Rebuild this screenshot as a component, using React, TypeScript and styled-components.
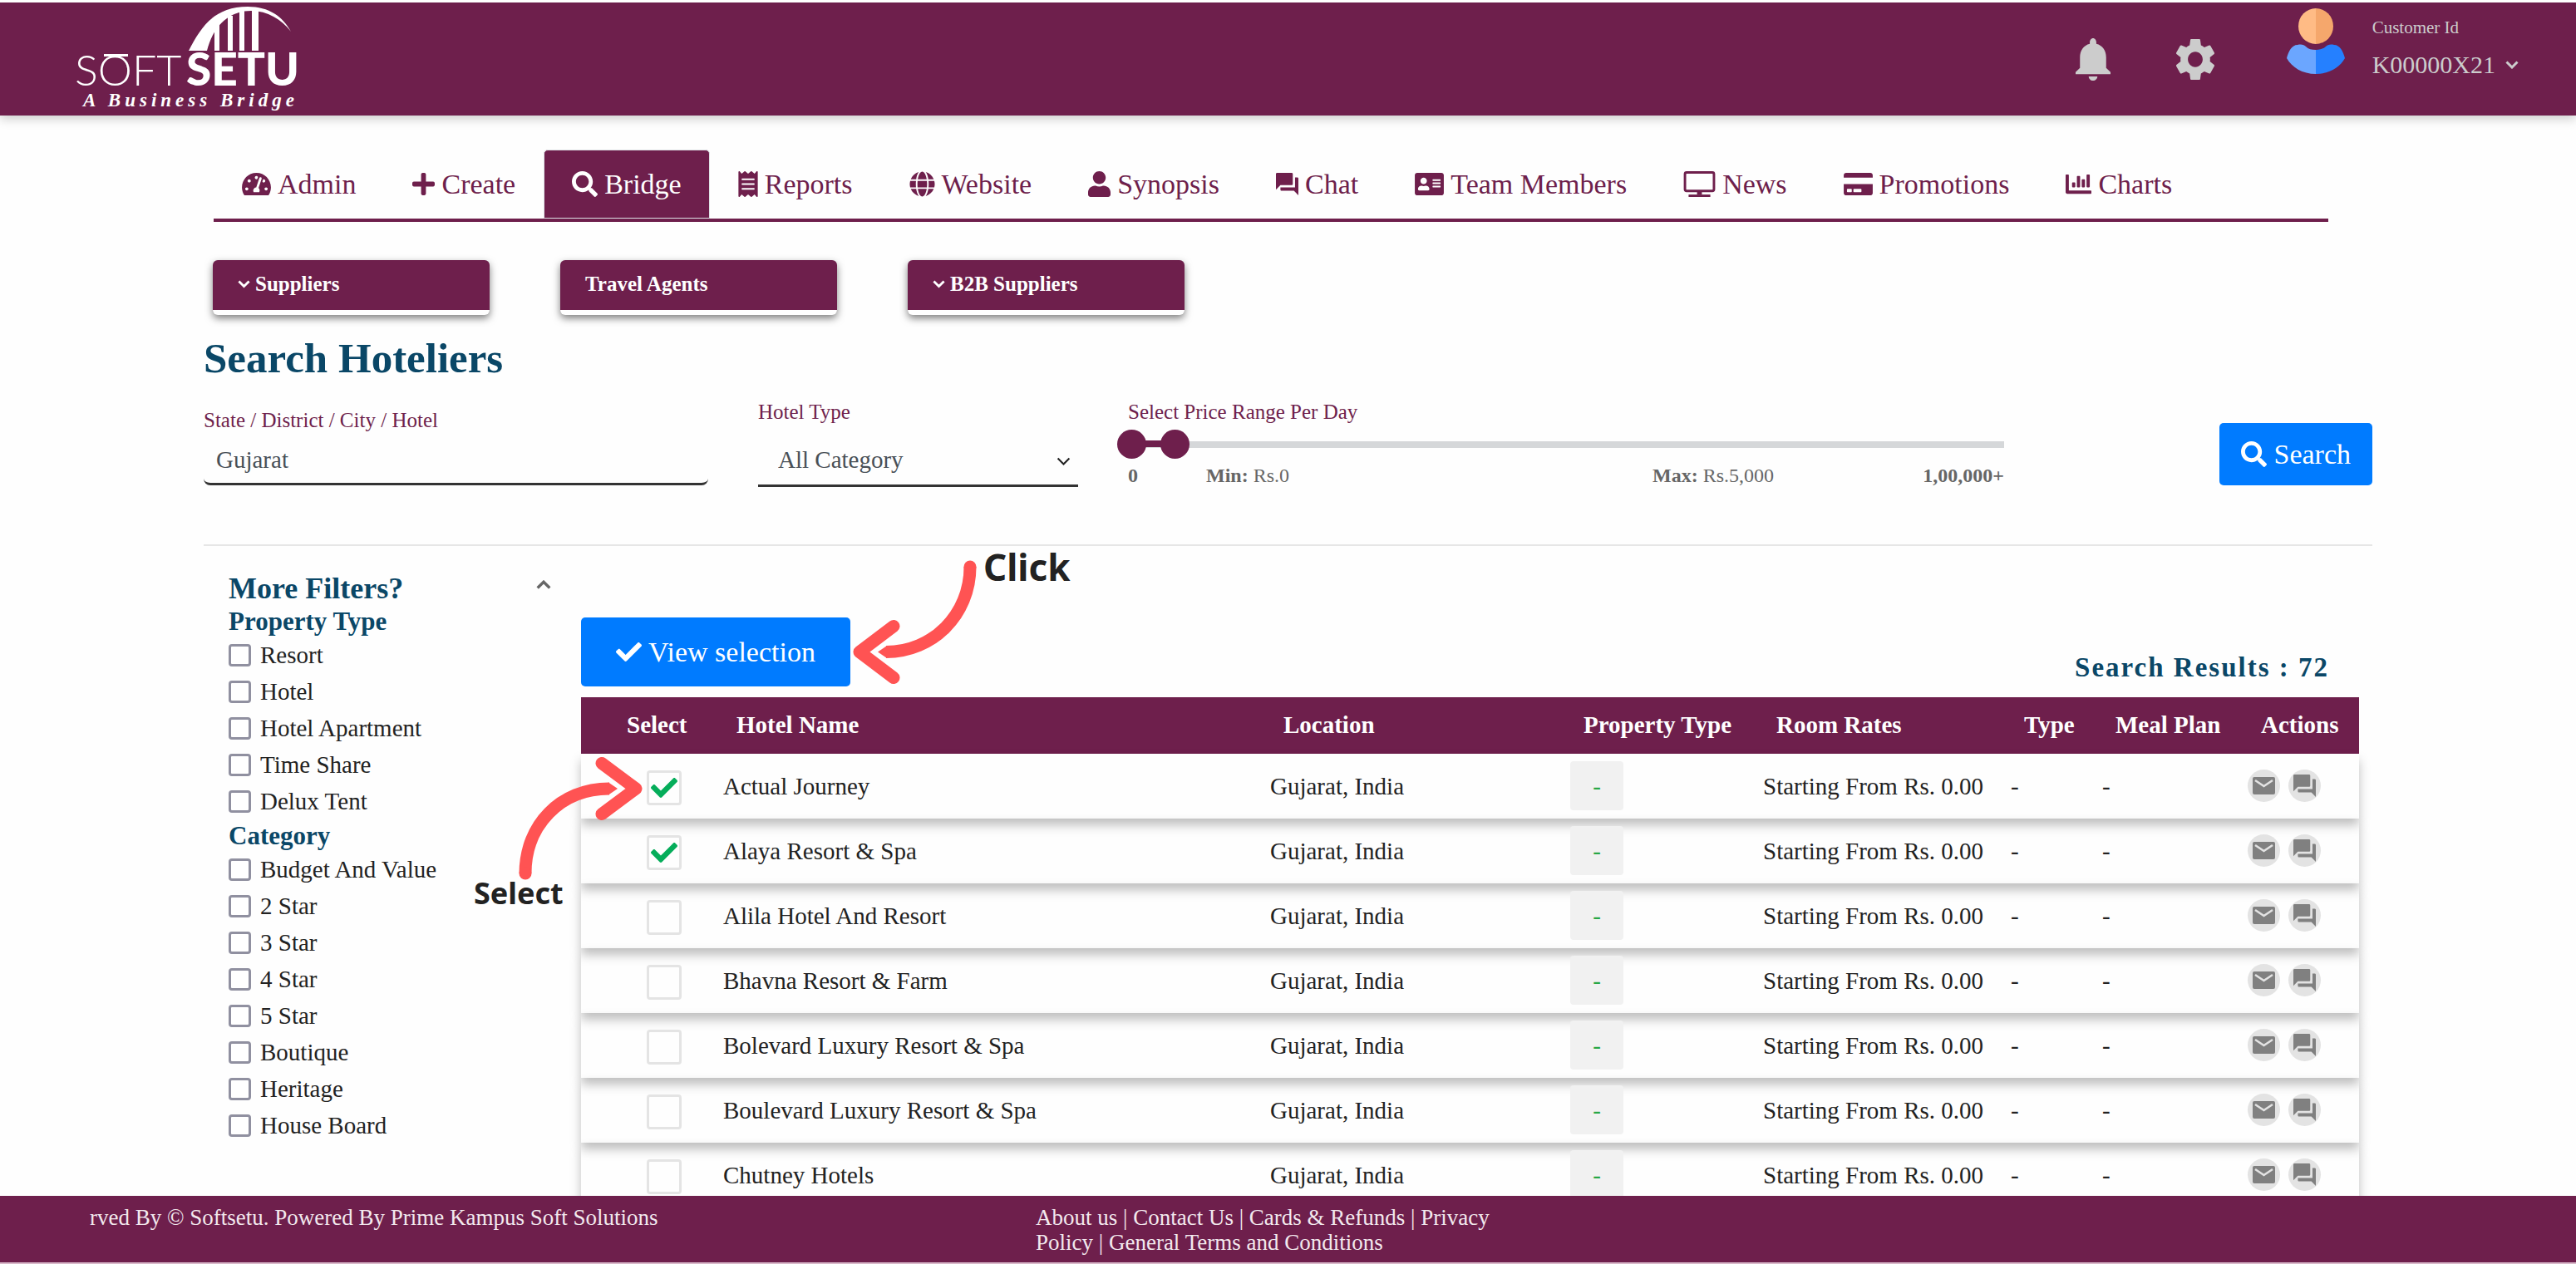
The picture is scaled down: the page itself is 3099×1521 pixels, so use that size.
import React from 'react';
import styled, { createGlobalStyle } from 'styled-components';
import {
  FaTachometerAlt,
  FaPlus,
  FaSearch,
  FaReceipt,
  FaGlobe,
  FaUser,
  FaAddressCard,
  FaCreditCard,
  FaChartBar,
  FaCheck,
} from 'react-icons/fa';

const maroon = '#6e1f4c';
const navy = '#0a4767';
const blue = '#007bff';
const coral = '#ff5353';

const GlobalStyle = createGlobalStyle`
  * { box-sizing: border-box; }
  body {
    margin: 0;
    background: #fefefe;
    color: #222;
    font-family: "Liberation Serif", "Times New Roman", serif;
  }
  button, input, select { font-family: inherit; }
`;

const Page = styled.div`
  display: flex;
  flex-direction: column;
  height: 100vh;
`;

/* ---------- header ---------- */

const Header = styled.header`
  display: flex;
  align-items: center;
  flex: none;
  height: 139px;
  padding: 0 69px 0 88px;
  border-top: 3px solid #fff;
  background: ${maroon};
  color: #ccc;
  box-shadow: 0 4px 12px rgba(0, 0, 0, 0.2);
  z-index: 1;
`;

const LogoLink = styled.a`
  display: block;
  margin-right: auto;
  svg { display: block; }
`;

const HeaderButton = styled.button`
  display: flex;
  margin-right: 78px;
  padding: 0;
  border: 0;
  background: none;
  color: #ccc;
`;

const Avatar = styled.svg`
  align-self: flex-start;
  margin: 7px 33px 0 8px;
`;

const Account = styled.div`
  display: flex;
  flex-direction: column;
  align-self: flex-start;
  gap: 16px;
  margin-top: 18px;
`;

const AccountLabel = styled.span`
  font-size: 21px;
  line-height: 24px;
`;

const AccountButton = styled.button`
  display: flex;
  align-items: center;
  gap: 12px;
  padding: 0;
  border: 0;
  background: none;
  color: #ccc;
  font-size: 30px;
  line-height: 34px;
`;

/* ---------- navigation ---------- */

const Main = styled.main`
  flex: 1;
  min-height: 0;
  padding: 41px 245px 0;
  overflow-y: auto;
  scrollbar-width: none;
`;

const Nav = styled.nav`
  display: flex;
  margin: 0 53px 0 12px;
  border-bottom: 4px solid ${maroon};
`;

const NavLink = styled.a<{ $active?: boolean }>`
  display: flex;
  align-items: center;
  gap: 8px;
  height: 83px;
  padding: 0 33px;
  border: 1px solid ${(p) => (p.$active ? '#dee2e6' : 'transparent')};
  border-radius: 5px 5px 0 0;
  background: ${(p) => (p.$active ? maroon : 'transparent')};
  color: ${(p) => (p.$active ? '#fff' : maroon)};
  font-size: 34px;
  line-height: 40px;
  text-decoration: none;
  white-space: nowrap;
`;

const NavIcon = styled.span<{ $w: number }>`
  display: flex;
  flex: none;
  width: ${(p) => p.$w}px;
  svg { width: 100%; height: 31px; }
`;

const Pills = styled.div`
  display: flex;
  gap: 85px;
  margin: 46px 0 24px 11px;
`;

const Pill = styled.button`
  display: flex;
  align-items: center;
  gap: 6px;
  width: 333px;
  height: 66px;
  padding: 0 30px 2px;
  border: 0;
  border-bottom: 6px solid #fff;
  border-radius: 6px;
  background: ${maroon};
  color: #fff;
  font-size: 25px;
  font-weight: 700;
  box-shadow: 0 4px 10px rgba(0, 0, 0, 0.5);
`;

/* ---------- search form ---------- */

const Title = styled.h1`
  margin: 0;
  color: ${navy};
  font-size: 51px;
  line-height: 56px;
`;

const SearchForm = styled.form`
  display: grid;
  grid-template-columns: 607fr 385fr 1054fr 383fr;
  column-gap: 60px;
  align-items: start;
  padding: 22px 0 68px;
  border-bottom: 2px solid #e6e6e6;
`;

const Field = styled.div<{ $drop?: boolean }>`
  display: flex;
  flex-direction: column;
  margin-top: ${(p) => (p.$drop ? '10px' : '0')};
`;

const Label = styled.label`
  color: ${maroon};
  font-size: 25px;
  line-height: 30px;
`;

const TextInput = styled.input`
  width: 100%;
  height: 63px;
  padding: 4px 15px 0;
  border: 0;
  border-bottom: 3px solid #333;
  border-radius: 8px;
  background: transparent;
  color: #495057;
  font-size: 29px;
`;

const SelectWrap = styled.div`
  display: flex;
  position: relative;
  svg {
    position: absolute;
    right: 9px;
    top: 39px;
    pointer-events: none;
  }
`;

const Select = styled.select`
  width: 100%;
  height: 75px;
  padding: 12px 24px 0;
  border: 0;
  border-bottom: 3px solid #333;
  border-radius: 0;
  background: transparent;
  color: #495057;
  font-size: 29px;
  appearance: none;
`;

const Track = styled.div`
  position: relative;
  height: 35px;
  margin: 6px 0 5px;
  background: linear-gradient(#d5d7d9, #d5d7d9) center / 100% 8px no-repeat;
`;

const TrackFill = styled.div`
  position: absolute;
  left: 0;
  top: 13px;
  height: 8px;
  background: ${maroon};
`;

const Range = styled.input`
  position: absolute;
  left: -13px;
  top: 0;
  width: calc(100% + 21px);
  height: 35px;
  margin: 0;
  background: none;
  appearance: none;
  pointer-events: none;
  &::-webkit-slider-thumb {
    width: 35px;
    height: 35px;
    border: 0;
    border-radius: 50%;
    background: ${maroon};
    appearance: none;
    pointer-events: auto;
  }
`;

const Scale = styled.div`
  display: grid;
  grid-template-columns: 94fr 537fr 300fr 123fr;
  color: #666;
  font-size: 24px;
  line-height: 30px;
  span:last-child { text-align: right; }
`;

const PrimaryButton = styled.button<{ $wide?: boolean }>`
  display: flex;
  align-items: center;
  justify-content: center;
  gap: 8px;
  height: ${(p) => (p.$wide ? '83px' : '75px')};
  padding: 0 ${(p) => (p.$wide ? '42px' : '26px')};
  border: 0;
  border-radius: 5px;
  background: ${blue};
  color: #fff;
  font-size: 34px;
  white-space: nowrap;
  svg { width: 31px; height: 31px; }
`;

const SubmitSlot = styled.div`
  display: flex;
  justify-content: flex-end;
  margin-top: 28px;
`;

/* ---------- filters ---------- */

const Columns = styled.div`
  display: grid;
  grid-template-columns: 454fr 2139fr;
  padding-right: 16px;
`;

const Filters = styled.aside`
  padding: 31px 36px 0 30px;
`;

const FiltersHead = styled.div`
  display: flex;
  align-items: flex-start;
  justify-content: space-between;
`;

const FiltersTitle = styled.h2`
  margin: 0;
  color: ${navy};
  font-size: 36px;
  line-height: 40px;
`;

const Collapse = styled.button`
  padding: 9px 0;
  border: 0;
  background: none;
  color: #666;
`;

const Group = styled.fieldset`
  margin: 0;
  padding: 0;
  border: 0;
`;

const GroupTitle = styled.legend`
  padding: 2px 0 0;
  color: ${navy};
  font-size: 31px;
  font-weight: 700;
  line-height: 36px;
`;

const FilterOption = styled.label`
  display: flex;
  align-items: center;
  gap: 11px;
  height: 44px;
  font-size: 29px;
`;

const FilterBox = styled.input`
  width: 27px;
  height: 27px;
  margin: 0;
  border: 3px solid #9090a0;
  border-radius: 4px;
  background: #fff;
  appearance: none;
`;

/* ---------- results ---------- */

const Results = styled.section`
  position: relative;
  padding-top: 86px;
`;

const ResultsBar = styled.div`
  display: flex;
  align-items: flex-end;
  justify-content: space-between;
  margin-bottom: 13px;
  padding-right: 36px;
`;

const ResultCount = styled.strong`
  padding-bottom: 3px;
  color: ${navy};
  font-size: 33px;
  line-height: 40px;
  letter-spacing: 2px;
`;

const Table = styled.table`
  width: 100%;
  border-spacing: 0;
  table-layout: fixed;
  font-size: 29px;
  line-height: 34px;
`;

const Col = styled.col<{ $w: number }>`
  width: ${(p) => p.$w}px;
`;

const HeadCell = styled.th`
  height: 68px;
  padding: 0 0 3px 16px;
  background: ${maroon};
  color: #fff;
  text-align: left;
  white-space: nowrap;
  &:first-child { padding-left: 55px; }
`;

const Row = styled.tr`
  box-shadow: 0 8px 12px rgba(0, 0, 0, 0.25);
`;

const Cell = styled.td`
  height: 78px;
  padding: 0 0 1px;
  white-space: nowrap;
  &:first-child { padding-left: 79px; }
`;

const Pick = styled.label`
  display: grid;
  width: 42px;
  height: 42px;
  margin-top: 4px;
  place-items: center;
  svg {
    grid-area: 1 / 1;
    width: 32px;
    height: 32px;
    color: #05ad5a;
    pointer-events: none;
  }
`;

const PickBox = styled.input`
  grid-area: 1 / 1;
  width: 42px;
  height: 42px;
  margin: 0;
  border: 3px solid #e4e4e4;
  border-radius: 4px;
  appearance: none;
`;

const Chip = styled.span`
  display: flex;
  align-items: center;
  justify-content: center;
  width: 64px;
  height: 59px;
  border-radius: 4px;
  background: #f1f1f1;
  color: #28a745;
`;

const Actions = styled.div`
  display: flex;
  gap: 10px;
`;

const RoundButton = styled.button`
  display: flex;
  align-items: center;
  justify-content: center;
  width: 39px;
  height: 39px;
  padding: 0;
  border: 0;
  border-radius: 50%;
  background: #e3e3e3;
  color: #808080;
`;

/* ---------- guide arrows over the results ---------- */

const Hint = styled.div<{ $x: number; $y: number }>`
  position: absolute;
  left: ${(p) => p.$x}px;
  top: ${(p) => p.$y}px;
  pointer-events: none;
  svg { display: block; overflow: visible; }
`;

const HintText = styled.span<{ $x: number; $y: number; $size: number }>`
  position: absolute;
  left: ${(p) => p.$x}px;
  top: ${(p) => p.$y}px;
  color: #222;
  font-family: "Noto Sans", "Open Sans", sans-serif;
  font-size: ${(p) => p.$size}px;
  font-weight: 700;
  line-height: 50px;
`;

/* ---------- footer ---------- */

const Footer = styled.footer`
  display: grid;
  grid-template-columns: 1138fr 560fr 1293fr;
  flex: none;
  padding: 11px 0 9px 108px;
  border-bottom: 2px solid #d9b9ca;
  background: ${maroon};
  color: #f3e9ee;
  font-size: 27px;
  line-height: 30px;
  z-index: 1;
  p { margin: 0; }
  a { color: inherit; text-decoration: none; }
`;

/* ---------- drawings ---------- */

const Chevron = ({ size = 16, up = false, width = 3 }: { size?: number; up?: boolean; width?: number }) => (
  <svg width={size} height={(size * 10) / 16} viewBox="0 0 16 10" fill="none" stroke="currentColor" strokeWidth={width} aria-hidden="true">
    <path d={up ? 'M1.5 8.5 8 2l6.5 6.5' : 'M1.5 1.5 8 8l6.5-6.5'} />
  </svg>
);

const BellIcon = () => (
  <svg width="42" height="51" viewBox="4 2 16 20" fill="currentColor" preserveAspectRatio="none">
    <path d="M12 22c1.1 0 2-.9 2-2h-4c0 1.1.89 2 2 2zm6-6v-5c0-3.07-1.64-5.64-4.5-6.32V4c0-1.1-.67-2-1.5-2s-1.5.9-1.5 2v.68C7.63 5.36 6 7.92 6 11v5l-2 2v1h16v-1l-2-2z" />
  </svg>
);

const GearIcon = () => (
  <svg width="48" height="51" viewBox="2.3 2 19.4 20" fill="currentColor" preserveAspectRatio="none">
    <path d="M19.14 12.94c.04-.3.06-.61.06-.94 0-.32-.02-.64-.07-.94l2.03-1.58c.18-.14.23-.41.12-.61l-1.92-3.32c-.12-.22-.37-.29-.59-.22l-2.39.96c-.5-.38-1.03-.7-1.62-.94l-.36-2.54c-.04-.24-.24-.41-.48-.41h-3.84c-.24 0-.43.17-.47.41l-.36 2.54c-.59.24-1.13.57-1.62.94l-2.39-.96c-.22-.08-.47 0-.59.22L2.74 8.87c-.12.21-.08.47.12.61l2.03 1.58c-.05.3-.09.63-.09.94s.02.64.07.94l-2.03 1.58c-.18.14-.23.41-.12.61l1.92 3.32c.12.22.37.29.59.22l2.39-.96c.5.38 1.03.7 1.62.94l.36 2.54c.05.24.24.41.48.41h3.84c.24 0 .44-.17.47-.41l.36-2.54c.59-.24 1.13-.56 1.62-.94l2.39.96c.22.08.47 0 .59-.22l1.92-3.32c.12-.22.07-.47-.12-.61l-2.01-1.58zM12 15.6c-1.98 0-3.6-1.62-3.6-3.6s1.62-3.6 3.6-3.6 3.6 1.62 3.6 3.6-1.62 3.6-3.6 3.6z" />
  </svg>
);

const ForumIcon = ({ size = 27 }: { size?: number }) => (
  <svg width={size} height={size} viewBox="2 2 20 20" fill="currentColor">
    <path d="M21 6h-2v9H6v2c0 .55.45 1 1 1h11l4 4V7c0-.55-.45-1-1-1zm-4 6V3c0-.55-.45-1-1-1H3c-.55 0-1 .45-1 1v14l4-4h10c.55 0 1-.45 1-1z" />
  </svg>
);

const MailIcon = () => (
  <svg width="27" height="21" viewBox="0 0 27 21">
    <rect width="27" height="21" rx="2" fill="currentColor" />
    <path d="M3 4l10.500 7L24 4" fill="none" stroke="#e3e3e3" strokeWidth="2.500" />
  </svg>
);

const MonitorIcon = () => (
  <svg viewBox="0 0 39 32" fill="none" stroke="currentColor">
    <rect x="1.500" y="1.500" width="36" height="23" rx="2" strokeWidth="3" />
    <path d="M19.500 25v4" strokeWidth="6" />
    <path d="M6 30.500h27" strokeWidth="3" />
  </svg>
);

const Logo = () => (
  <svg width="280" height="130" viewBox="-4 0 280 130" fill="#fff" role="img" aria-label="Softsetu">
    <path d="M135 55C150 26 166 2 206 2c26 0 42 12 52 30-12-15-28-25-48-25-28 0-46 20-53 48z" />
    <path d="M166 22h6v33h-6zM182 13h6v42h-6zM196 7h6v48h-6zM211 5h8v50h-8z" />
    <rect x="33" y="59" width="29" height="3" />
    <text x="-2" y="97" fontFamily="Lato, sans-serif" fontWeight="300" fontSize="52">SOFT</text>
    <text x="132" y="97" fontFamily="Lato, sans-serif" fontWeight="900" fontSize="55">SETU</text>
    <text x="8" y="122" fontFamily="'Liberation Serif', serif" fontStyle="italic" fontWeight="700" fontSize="23" letterSpacing="5">A Business Bridge</text>
  </svg>
);

const navItems = [
  { label: 'Admin', icon: <FaTachometerAlt />, width: 35 },
  { label: 'Create', icon: <FaPlus />, width: 27 },
  { label: 'Bridge', icon: <FaSearch />, width: 31, active: true },
  { label: 'Reports', icon: <FaReceipt />, width: 24 },
  { label: 'Website', icon: <FaGlobe />, width: 31 },
  { label: 'Synopsis', icon: <FaUser />, width: 27 },
  { label: 'Chat', icon: <ForumIcon />, width: 27 },
  { label: 'Team Members', icon: <FaAddressCard />, width: 35 },
  { label: 'News', icon: <MonitorIcon />, width: 39 },
  { label: 'Promotions', icon: <FaCreditCard />, width: 35 },
  { label: 'Charts', icon: <FaChartBar />, width: 31 },
];

const pills = [
  { label: 'Suppliers', menu: true },
  { label: 'Travel Agents', menu: false },
  { label: 'B2B Suppliers', menu: true },
];

const filterGroups = [
  { title: 'Property Type', options: ['Resort', 'Hotel', 'Hotel Apartment', 'Time Share', 'Delux Tent'] },
  {
    title: 'Category',
    options: ['Budget And Value', '2 Star', '3 Star', '4 Star', '5 Star', 'Boutique', 'Heritage', 'House Board'],
  },
];

const columns = [
  { title: 'Select', width: 171 },
  { title: 'Hotel Name', width: 658 },
  { title: 'Location', width: 361 },
  { title: 'Property Type', width: 232 },
  { title: 'Room Rates', width: 298 },
  { title: 'Type', width: 110 },
  { title: 'Meal Plan', width: 175 },
  { title: 'Actions', width: 134 },
];

const initialHotels = [
  { name: 'Actual Journey', picked: true },
  { name: 'Alaya Resort & Spa', picked: true },
  { name: 'Alila Hotel And Resort', picked: false },
  { name: 'Bhavna Resort & Farm', picked: false },
  { name: 'Bolevard Luxury Resort & Spa', picked: false },
  { name: 'Boulevard Luxury Resort & Spa', picked: false },
  { name: 'Chutney Hotels', picked: false },
];

const MAX_PRICE = 100000;

export default function App() {
  const [hotels, setHotels] = React.useState(initialHotels);
  const [place, setPlace] = React.useState('Gujarat');
  const [low, setLow] = React.useState(0);
  const [high, setHigh] = React.useState(5000);

  const toggle = (name: string) =>
    setHotels((list) => list.map((h) => (h.name === name ? { ...h, picked: !h.picked } : h)));

  return (
    <>
      <GlobalStyle />
      <Page>
        <Header>
          <LogoLink href="#home">
            <Logo />
          </LogoLink>
          <HeaderButton aria-label="Notifications">
            <BellIcon />
          </HeaderButton>
          <HeaderButton aria-label="Settings">
            <GearIcon />
          </HeaderButton>
          <Avatar width="70" height="80" viewBox="0 0 70 80" aria-hidden="true">
            <path d="M35 0a21 21.500 0 0 0 0 43z" fill="#ffbb85" />
            <path d="M35 0a21 21.500 0 0 1 0 43z" fill="#f5a76c" />
            <path d="M35 79C19 79 6 71 0 60c2-8 6-16 13-16 5-1 8 0 10 2 3 3 7 4 12 4z" fill="#6ba6ff" />
            <path d="M35 79c16 0 29-8 35-19-2-8-6-16-13-16-5-1-8 0-10 2-3 3-7 4-12 4z" fill="#2580ff" />
          </Avatar>
          <Account>
            <AccountLabel>Customer Id</AccountLabel>
            <AccountButton>
              K00000X21 <Chevron />
            </AccountButton>
          </Account>
        </Header>

        <Main>
          <Nav>
            {navItems.map((item) => (
              <NavLink key={item.label} href="#" $active={item.active}>
                <NavIcon $w={item.width}>{item.icon}</NavIcon>
                {item.label}
              </NavLink>
            ))}
          </Nav>

          <Pills>
            {pills.map((pill) => (
              <Pill key={pill.label} type="button">
                {pill.menu && <Chevron size={15} />}
                {pill.label}
              </Pill>
            ))}
          </Pills>

          <Title>Search Hoteliers</Title>
          <SearchForm onSubmit={(e) => e.preventDefault()}>
            <Field $drop>
              <Label htmlFor="place">State / District / City / Hotel</Label>
              <TextInput id="place" value={place} onChange={(e) => setPlace(e.target.value)} />
            </Field>
            <Field>
              <Label htmlFor="hotel-type">Hotel Type</Label>
              <SelectWrap>
                <Select id="hotel-type">
                  <option>All Category</option>
                </Select>
                <Chevron size={17} width={2} />
              </SelectWrap>
            </Field>
            <Field>
              <Label htmlFor="price-low">Select Price Range Per Day</Label>
              <Track>
                <TrackFill style={{ width: `${(high / MAX_PRICE) * 100}%` }} />
                <Range
                  id="price-low"
                  type="range"
                  min={0}
                  max={MAX_PRICE}
                  value={low}
                  onChange={(e) => setLow(Number(e.target.value))}
                />
                <Range
                  type="range"
                  aria-label="Highest price"
                  min={0}
                  max={MAX_PRICE}
                  value={high}
                  onChange={(e) => setHigh(Number(e.target.value))}
                />
              </Track>
              <Scale>
                <span><b>0</b></span>
                <span><b>Min:</b> Rs.{low}</span>
                <span><b>Max:</b> Rs.{high.toLocaleString('en-US')}</span>
                <span><b>1,00,000+</b></span>
              </Scale>
            </Field>
            <SubmitSlot>
              <PrimaryButton type="submit">
                <FaSearch /> Search
              </PrimaryButton>
            </SubmitSlot>
          </SearchForm>

          <Columns>
            <Filters>
              <FiltersHead>
                <FiltersTitle>More Filters?</FiltersTitle>
                <Collapse type="button" aria-label="Collapse filters">
                  <Chevron size={18} up />
                </Collapse>
              </FiltersHead>
              {filterGroups.map((group) => (
                <Group key={group.title}>
                  <GroupTitle>{group.title}</GroupTitle>
                  {group.options.map((option) => (
                    <FilterOption key={option}>
                      <FilterBox type="checkbox" />
                      {option}
                    </FilterOption>
                  ))}
                </Group>
              ))}
            </Filters>

            <Results>
              <ResultsBar>
                <PrimaryButton type="button" $wide>
                  <FaCheck /> View selection
                </PrimaryButton>
                <ResultCount>Search Results : 72</ResultCount>
              </ResultsBar>

              <Table>
                <colgroup>
                  {columns.map((c) => (
                    <Col key={c.title} $w={c.width} />
                  ))}
                </colgroup>
                <thead>
                  <tr>
                    {columns.map((c) => (
                      <HeadCell key={c.title} scope="col">{c.title}</HeadCell>
                    ))}
                  </tr>
                </thead>
                <tbody>
                  {hotels.map((hotel) => (
                    <Row key={hotel.name}>
                      <Cell>
                        <Pick>
                          <PickBox
                            type="checkbox"
                            aria-label={`Select ${hotel.name}`}
                            checked={hotel.picked}
                            onChange={() => toggle(hotel.name)}
                          />
                          {hotel.picked && <FaCheck />}
                        </Pick>
                      </Cell>
                      <Cell>{hotel.name}</Cell>
                      <Cell>Gujarat, India</Cell>
                      <Cell><Chip>-</Chip></Cell>
                      <Cell>Starting From Rs. 0.00</Cell>
                      <Cell>-</Cell>
                      <Cell>-</Cell>
                      <Cell>
                        <Actions>
                          <RoundButton type="button" aria-label={`Mail ${hotel.name}`}>
                            <MailIcon />
                          </RoundButton>
                          <RoundButton type="button" aria-label={`Chat with ${hotel.name}`}>
                            <ForumIcon />
                          </RoundButton>
                        </Actions>
                      </Cell>
                    </Row>
                  ))}
                </tbody>
              </Table>

              <Hint $x={327} $y={17}>
                <svg width="150" height="150" viewBox="0 0 150 150" fill="none" stroke={coral} strokeWidth="15">
                  <path d="M49 79.500 8 110.500 49 141.500" strokeLinecap="round" strokeLinejoin="round" />
                  <path d="M141 8C141 66 96 110.500 40 110.500" />
                  <circle cx="141" cy="8" r="7.500" fill={coral} stroke="none" />
                  <path d="M41 103 30 110.500 41 118z" fill={coral} stroke="none" />
                </svg>
                <HintText $x={157} $y={-17} $size={44}>Click</HintText>
              </Hint>
              <Hint $x={-75} $y={252}>
                <svg width="150" height="150" viewBox="0 0 150 150" fill="none" stroke={coral} strokeWidth="15">
                  <path d="M100 9.500 141 40 100 70.500" strokeLinecap="round" strokeLinejoin="round" />
                  <path d="M8 142C8 84 50 40 109 40" />
                  <circle cx="8" cy="142" r="7.500" fill={coral} stroke="none" />
                  <path d="M108 32.500 119 40 108 47.500z" fill={coral} stroke="none" />
                </svg>
                <HintText $x={-54} $y={141} $size={36}>Select</HintText>
              </Hint>
            </Results>
          </Columns>
        </Main>

        <Footer>
          <p>rved By © Softsetu. Powered By Prime Kampus Soft Solutions</p>
          <p>
            <a href="#about">About us</a> | <a href="#contact">Contact Us</a> | <a href="#cards">Cards &amp; Refunds</a> |{' '}
            <a href="#privacy">Privacy Policy</a> | <a href="#terms">General Terms and Conditions</a>
          </p>
        </Footer>
      </Page>
    </>
  );
}
